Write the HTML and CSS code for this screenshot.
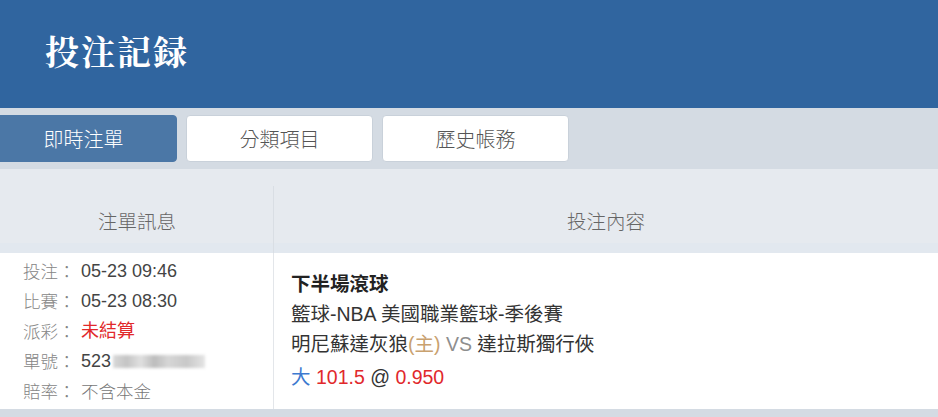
FILE: index.html
```html
<!DOCTYPE html>
<html lang="zh-Hant">
<head>
<meta charset="utf-8">
<link rel="stylesheet" href="styles.css">
</head>
<body>
<header class="top">
  <h1 class="title">投注記録</h1>
</header>
<nav class="tabs">
  <div class="tab active">即時注單</div>
  <div class="tab">分類項目</div>
  <div class="tab">歷史帳務</div>
</nav>
<section class="table">
  <div class="thead">
    <div class="th th-left">注單訊息</div>
    <div class="th th-right">投注內容</div>
  </div>
  <div class="row">
    <div class="cell-left">
      <div class="line"><span class="lbl">投注：</span><span class="val">05-23 09:46</span></div>
      <div class="line"><span class="lbl">比賽：</span><span class="val">05-23 08:30</span></div>
      <div class="line"><span class="lbl">派彩：</span><span class="val red">未結算</span></div>
      <div class="line"><span class="lbl">單號：</span><span class="val">523</span><span class="blur"></span></div>
      <div class="line"><span class="lbl">賠率：</span><span class="val plain">不含本金</span></div>
    </div>
    <div class="cell-right">
      <div class="rline bold">下半場滾球</div>
      <div class="rline">籃球-NBA 美國職業籃球-季後賽</div>
      <div class="rline">明尼蘇達灰狼<span class="home">(主)</span> <span class="vs">VS</span> 達拉斯獨行俠</div>
      <div class="rline odds"><span class="blue">大</span> <span class="red">101.5</span> @ <span class="red">0.950</span></div>
    </div>
  </div>
  <div class="foot"></div>
</section>
</body>
</html>
```
FILE: styles.css
```css
html, body {
  margin: 0;
  padding: 0;
  background: #ffffff;
  overflow: hidden;
}
body {
  width: 938px;
  height: 417px;
  font-family: "Liberation Sans", "Noto Sans CJK TC", sans-serif;
}
.top {
  height: 108px;
  background: #30659f;
  display: flex;
  align-items: center;
  padding-left: 45px;
  box-sizing: border-box;
}
.title {
  margin: 0;
  color: #ffffff;
  font-family: "Noto Serif CJK TC", "Noto Serif CJK SC", "Noto Sans CJK TC", serif;
  font-weight: 700;
  font-size: 34px;
  letter-spacing: 2px;
  line-height: 1;
  margin-top: -7px;
}
.tabs {
  height: 61px;
  background: #d4dbe3;
  display: flex;
  gap: 9px;
  padding-top: 7px;
  box-sizing: border-box;
}
.tab {
  width: 187px;
  height: 47px;
  box-sizing: border-box;
  background: #ffffff;
  border: 1px solid #c9d1da;
  border-radius: 4px;
  display: flex;
  align-items: center;
  justify-content: center;
  font-family: "Noto Sans CJK TC", sans-serif;
  font-weight: 300;
  font-size: 20px;
  color: #555;
}
.tab.active {
  margin-left: -10px;
  background: #4b77a6;
  border-color: #4b77a6;
  color: #ffffff;
}
.table {
  background: #ffffff;
}
.thead {
  display: flex;
  height: 84px;
  background: #e6eaef;
  border-bottom: 10px solid #e2e8ef;
  box-sizing: border-box;
}
.th {
  display: flex;
  align-items: center;
  justify-content: center;
  padding-top: 28px;
  box-sizing: border-box;
  font-family: "Noto Sans CJK TC", sans-serif;
  font-weight: 300;
  font-size: 19.5px;
  color: #666;
}
.th-left {
  width: 274px;
  position: relative;
}
.th-left::after {
  content: "";
  position: absolute;
  right: 0;
  top: 17px;
  bottom: -10px;
  width: 1px;
  background: #d9dee4;
}
.th-right {
  flex: 1;
}
.row {
  display: flex;
  height: 156px;
}
.cell-left {
  width: 274px;
  box-sizing: border-box;
  border-right: 1px solid #e3e6ea;
  padding: 3px 0 0 23px;
}
.line {
  height: 30px;
  line-height: 30px;
  font-size: 17.5px;
  white-space: nowrap;
  display: flex;
  align-items: center;
}
.lbl {
  color: #858585;
  font-family: "Noto Sans CJK TC", sans-serif;
  font-weight: 300;
  width: 58px;
}
.val {
  color: #444;
  font-size: 18px;
}
.val.plain {
  color: #777;
  font-size: 17.5px;
  font-weight: 300;
  font-family: "Noto Sans CJK TC", sans-serif;
}
.red {
  color: #e1282b;
}
.blur {
  display: inline-block;
  width: 92px;
  height: 13px;
  margin-left: 2px;
  background: linear-gradient(90deg, #d8d8d8 0%, #c4c4c4 15%, #e0e0e0 30%, #bcbcbc 45%, #d6d6d6 60%, #c8c8c8 80%, #e4e4e4 100%);
  filter: blur(1.5px);
}
.cell-right {
  flex: 1;
  padding: 16px 0 0 17px;
}
.rline {
  height: 30px;
  line-height: 30px;
  font-size: 19.5px;
  color: #333;
  white-space: nowrap;
}
.rline.bold {
  font-weight: 700;
  color: #222;
}
.rline.odds {
  margin-top: 3px;
}
.home {
  color: #c9a16f;
}
.vs {
  color: #8e8e8e;
}
.blue {
  color: #3d7ad0;
}
.foot {
  height: 8px;
  background: #d4dbe3;
}
```
